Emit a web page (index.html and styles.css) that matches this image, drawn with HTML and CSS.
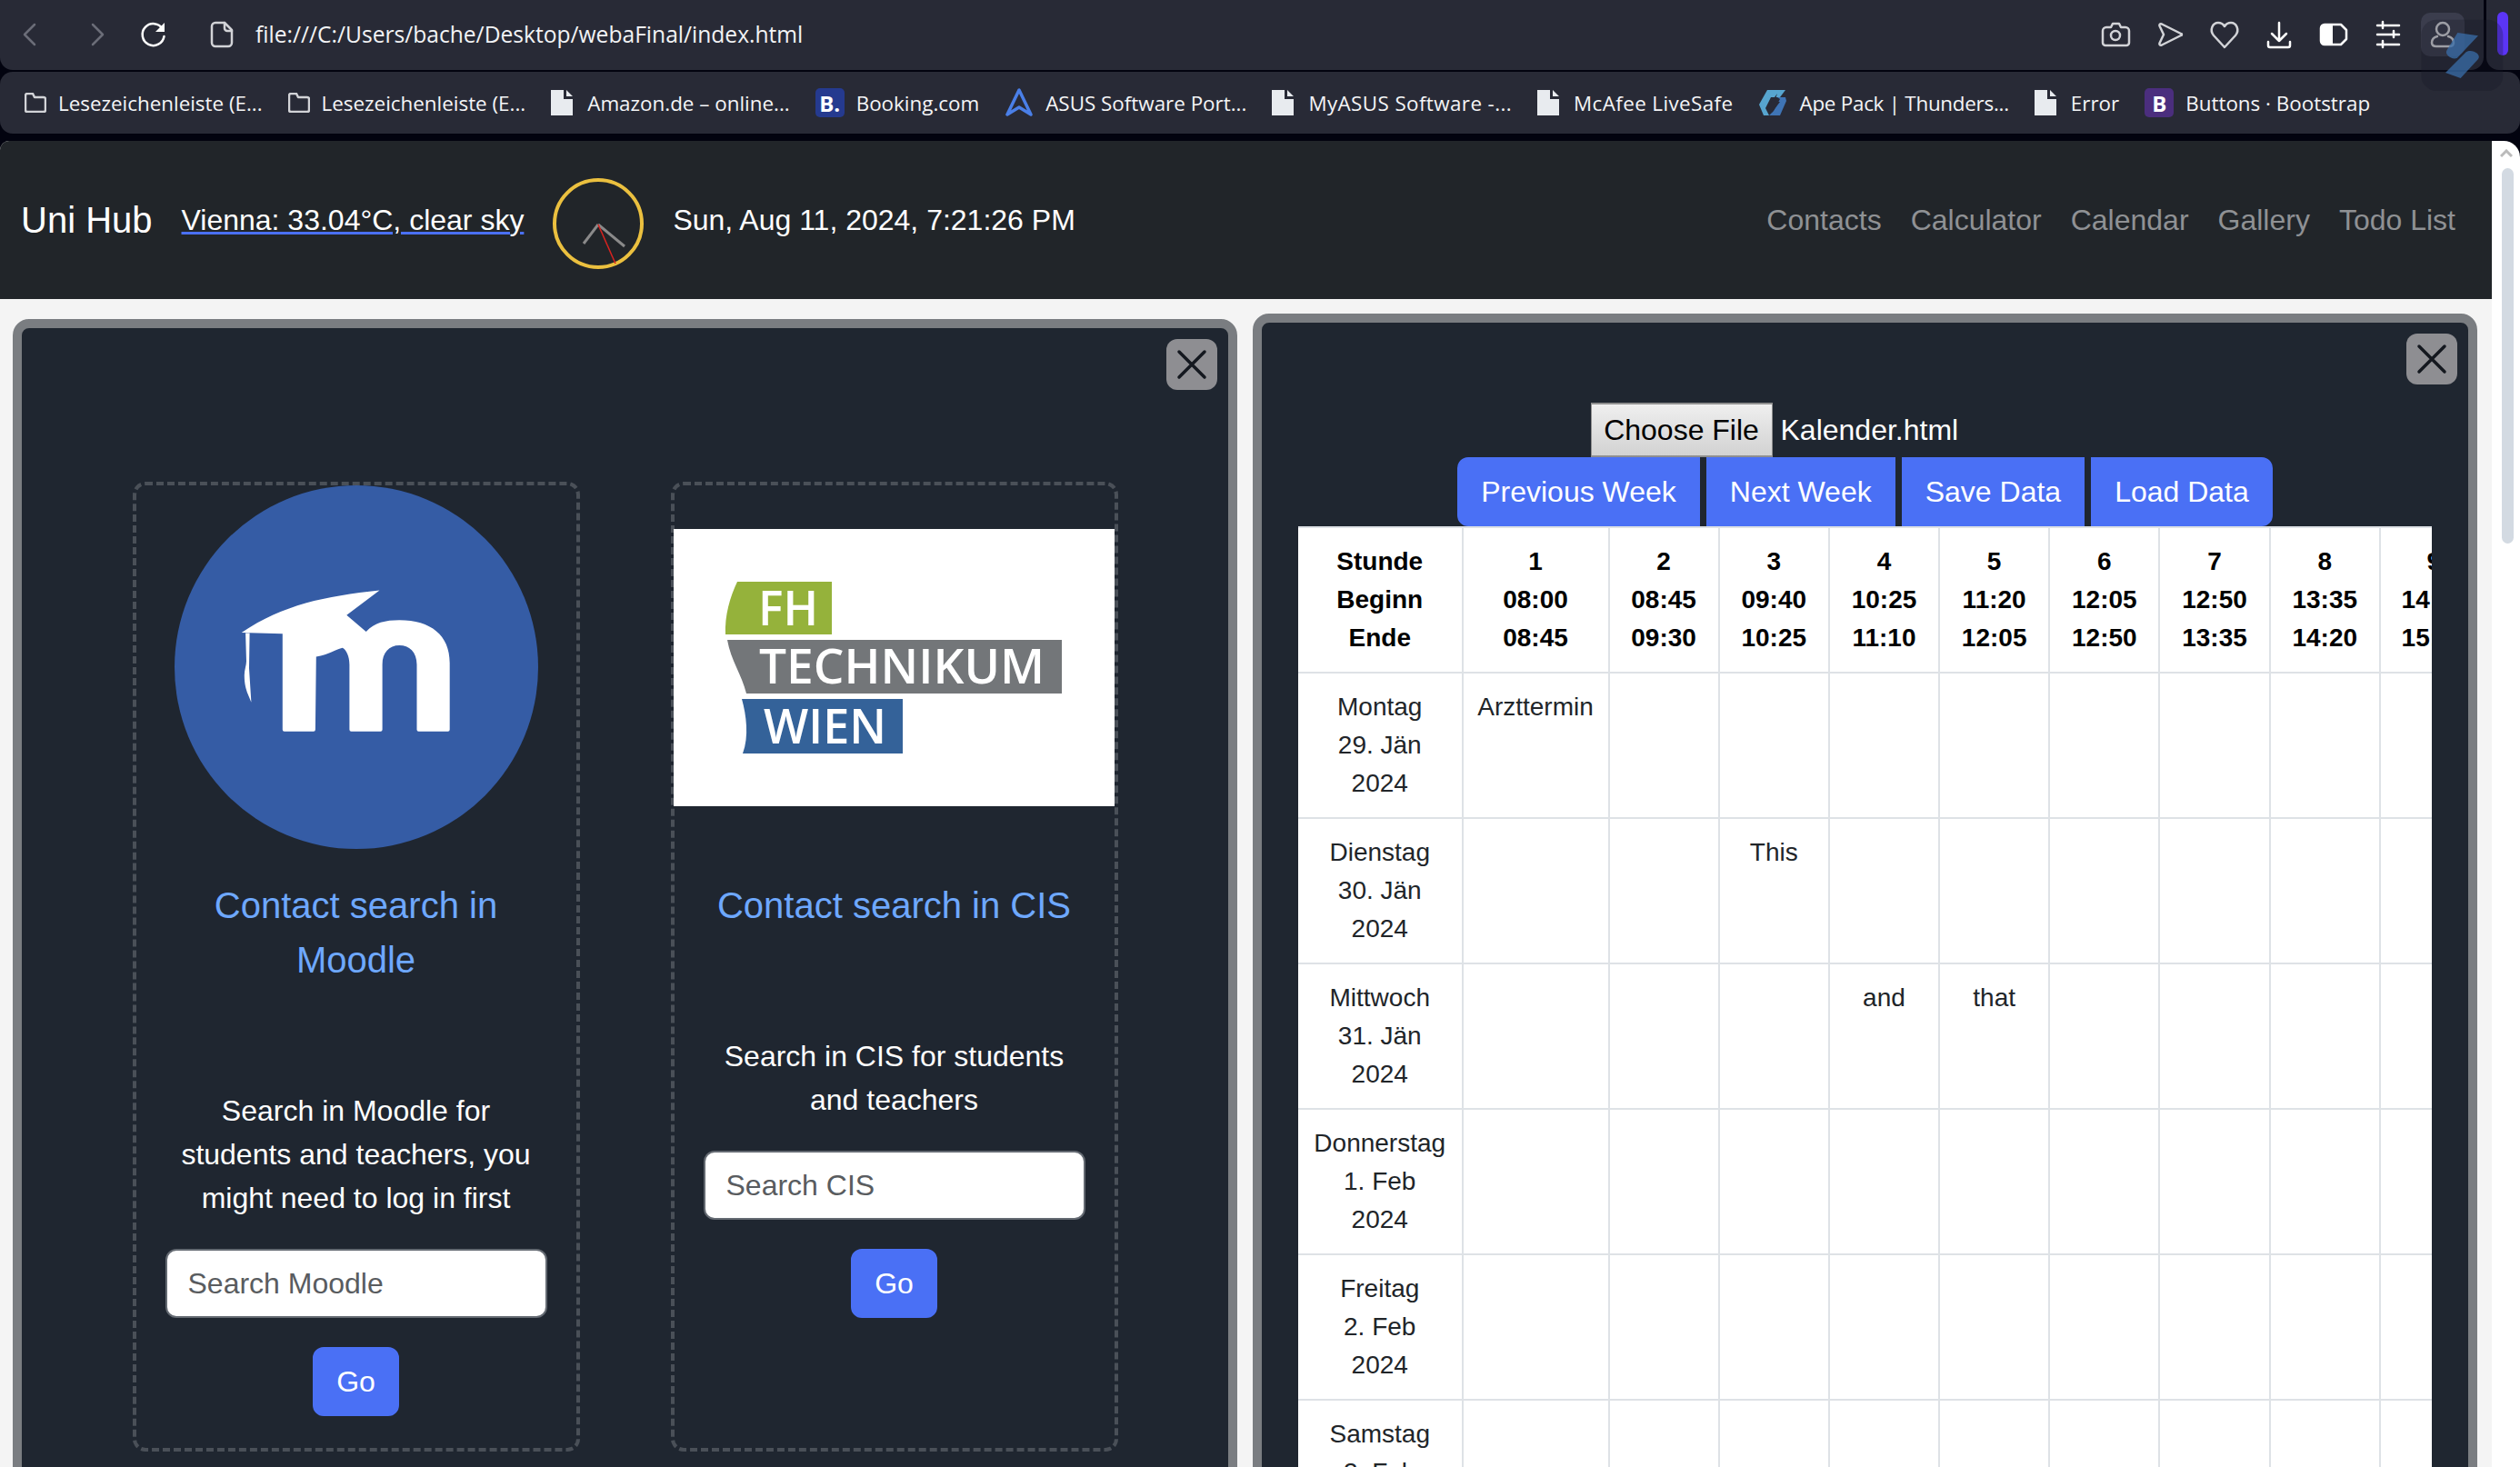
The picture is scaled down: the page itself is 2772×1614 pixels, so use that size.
FILE: index.html
```html
<!DOCTYPE html>
<html lang="en">
<head>
  <meta charset="UTF-8">
  <title>Uni Hub</title>
  <link rel="stylesheet" href="styles.css">
</head>
<body>
  <!-- browser chrome -->
  <div class="chrome">
    <div class="top-row">
      <div class="toolbar">
        <span class="tool nav-back"><svg width="36" height="36" viewBox="0 0 36 36"><path class="dim" d="M23 7 12 18l11 11"/></svg></span>
        <span class="tool nav-forward"><svg width="36" height="36" viewBox="0 0 36 36"><path class="dim" d="m13 7 11 11-11 11"/></svg></span>
        <span class="tool nav-reload"><svg width="36" height="36" viewBox="0 0 36 36"><path class="light" d="M28 12a12 12 0 1 0 1.500 8"/><path class="solid" d="M30 5v10H20z"/></svg></span>
        <span class="tool nav-doc"><svg width="36" height="36" viewBox="0 0 36 36"><path class="soft" d="M11 6h10l8 8v14a4 4 0 0 1-4 4H11a4 4 0 0 1-4-4V10a4 4 0 0 1 4-4z" transform="translate(1 -1)"/><path class="soft" d="M22 5v6a3 3 0 0 0 3 3h5"/></svg></span>
        <span class="url">file:///C:/Users/bache/Desktop/webaFinal/index.html</span>
        <div class="tool-group">
          <span class="tool"><svg width="36" height="36" viewBox="0 0 36 36"><path class="soft" d="M8 10h5l2-4h7l2 4h5a4 4 0 0 1 4 4v13a3 3 0 0 1-3 3H7a3 3 0 0 1-3-3V14a4 4 0 0 1 4-4z"/><circle class="soft" cx="18" cy="19" r="5"/></svg></span>
          <span class="tool"><svg width="36" height="36" viewBox="0 0 36 36"><path class="soft" d="M9 6.500 30 17a1 1 0 0 1 0 2L9 29.500c-2 .8-3-.5-2.500-2L11 18 6.500 8.500C6 7 7 5.700 9 6.500z"/></svg></span>
          <span class="tool"><svg width="36" height="36" viewBox="0 0 36 36"><path class="soft" d="M18 32 6 19C1 13 5 5 11 5c3 0 5.500 1.500 7 4 1.500-2.500 4-4 7-4 6 0 10 8 5 14z"/></svg></span>
          <span class="tool"><svg width="36" height="36" viewBox="0 0 36 36"><path class="light" d="M18 5v20M10 17l8 8 8-8M6 26v4a2 2 0 0 0 2 2h20a2 2 0 0 0 2-2v-4"/></svg></span>
          <span class="tool"><svg width="36" height="36" viewBox="0 0 36 36"><path class="light" d="M8 7h18l6 6v10l-6 6H8a4 4 0 0 1-4-4V11a4 4 0 0 1 4-4z"/><path class="solid" d="M8 7h9v22H8a4 4 0 0 1-4-4V11a4 4 0 0 1 4-4z"/></svg></span>
          <span class="tool"><svg width="36" height="36" viewBox="0 0 36 36"><path class="light" d="M6 8h24M6 18h24M6 29h24M12 4v7M24 14v7M12 25v7"/></svg></span>
          <span class="tool tool-active"><svg width="36" height="36" viewBox="0 0 36 36"><circle class="soft" cx="18" cy="12" r="7"/><path class="soft" d="M12 20c-4 1-6 4-6 7 0 3 2 4 5 4h14c3 0 5-1 5-4 0-3-2-6-6-7"/></svg></span>
        </div>
      </div>
      <div class="side-strip"><span class="side-bar"></span></div>
    </div>
    <div class="bookmarks">
      <span class="bm"><svg width="24" height="22" viewBox="0 0 24 22"><path class="soft" d="M1 3a2 2 0 0 1 2-2h6l2 4h10a2 2 0 0 1 2 2v12a2 2 0 0 1-2 2H3a2 2 0 0 1-2-2z"/></svg>Lesezeichenleiste (E...</span>
      <span class="bm"><svg width="24" height="22" viewBox="0 0 24 22"><path class="soft" d="M1 3a2 2 0 0 1 2-2h6l2 4h10a2 2 0 0 1 2 2v12a2 2 0 0 1-2 2H3a2 2 0 0 1-2-2z"/></svg>Lesezeichenleiste (E...</span>
      <span class="bm bm-doc"><svg width="24" height="28" viewBox="0 0 24 28"><path class="doc" d="M0 0h14v10h10v18H0zM17 0l7 7h-7z"/></svg>Amazon.de – online...</span>
      <span class="bm"><span class="fav fav-booking">B.</span>Booking.com</span>
      <span class="bm"><svg width="32" height="32" viewBox="0 0 32 32"><path class="asus" d="M16 2 3 29l13-8 13 8zM3 29"/></svg>ASUS Software Port...</span>
      <span class="bm bm-doc bm-loose"><svg width="24" height="28" viewBox="0 0 24 28"><path class="doc" d="M0 0h14v10h10v18H0zM17 0l7 7h-7z"/></svg>MyASUS Software -...</span>
      <span class="bm bm-doc bm-loose"><svg width="24" height="28" viewBox="0 0 24 28"><path class="doc" d="M0 0h14v10h10v18H0zM17 0l7 7h-7z"/></svg>McAfee LiveSafe</span>
      <span class="bm bm-tight"><svg width="32" height="32" viewBox="0 0 32 32"><path class="ape-a" d="M10 2h20l-6 8H14l-6 12 4 8H6L1 18z"/><path class="ape-b" d="M14 10h16l1 4-7 16H12l5-5 7-13-3-2z"/><path class="ape-c" d="M21 6 12 18h6l-3 9 9-12h-6z"/></svg>Ape Pack | Thunders...</span>
      <span class="bm bm-doc"><svg width="24" height="28" viewBox="0 0 24 28"><path class="doc" d="M0 0h14v10h10v18H0zM17 0l7 7h-7z"/></svg>Error</span>
      <span class="bm"><span class="fav fav-bootstrap">B</span>Buttons · Bootstrap</span>
    </div>
  </div>

  <!-- floating extension badge over the chrome -->
  <svg class="ext-badge" width="122" height="110" viewBox="0 0 366 330">
    <rect class="ext-shadow" x="40" y="65" width="270" height="235" rx="50"/>
    <path class="ext-top" d="M160 108 228 118 158 192C140 198 115 180 125 165z"/>
    <path class="ext-bottom" d="M120 240 188 172C205 160 240 178 228 195L170 258z"/>
  </svg>

  <div class="page">
    <div class="content">
      <nav class="navbar">
        <a class="brand">Uni Hub</a>
        <a class="weather">Vienna: 33.04°C, clear sky</a>
        <svg class="clock" width="100" height="100" viewBox="0 0 100 100">
          <circle class="clock-face" cx="50" cy="50" r="48"/>
          <line class="clock-hand" x1="50" y1="51" x2="34" y2="72"/>
          <line class="clock-hand" x1="50" y1="51" x2="79" y2="75"/>
          <line class="clock-second" x1="50" y1="51" x2="69" y2="94"/>
        </svg>
        <span class="datetime">Sun, Aug 11, 2024, 7:21:26 PM</span>
        <ul class="nav-links">
          <li>Contacts</li>
          <li>Calculator</li>
          <li>Calendar</li>
          <li>Gallery</li>
          <li>Todo List</li>
        </ul>
      </nav>

      <main class="panels">
        <!-- contact search -->
        <section class="panel panel-left">
          <button class="close-btn"><svg width="34" height="34" viewBox="0 0 34 34"><path d="M3 3l28 28M31 3 3 31"/></svg></button>
          <div class="card-row">
            <div class="card">
              <div class="card-img">
                <svg width="400" height="400" viewBox="0 0 400 400">
                  <circle class="moodle-bg" cx="200" cy="200" r="200"/>
                  <path class="moodle-m" d="M73.700 162C120 131 165 122 225.500 115.500L189.300 142.800 210.700 160.900C220 151 232 148.300 247.300 148.300 282 148.300 302.700 165 302.700 195.300V268.800Q302.700 270.800 300.700 270.800H268.500Q266.500 270.800 266.500 268.800V197.300C266.500 183 258 176 247.300 176 236 176 228.600 184 228.600 197.300V268.800Q228.600 270.800 226.600 270.800H194.400Q192.400 270.800 192.400 268.800V197.300C192.400 188 189 181 184.800 178.700 178 180 170 186 155.800 188.600L154.900 268.800Q154.900 270.800 152.900 270.800H120.800Q118.800 270.800 118.800 268.800V163.300z"/>
                  <path class="moodle-m" d="M78.100 162.500H82.600L82 201.300 84.400 238.800C80 228 76.800 222 76.800 209 76.800 203 79 198 79 193.400z"/>
                </svg>
              </div>
              <h2 class="card-title">Contact search in Moodle</h2>
              <p class="card-text">Search in Moodle for students and teachers, you might need to log in first</p>
              <input class="search-input" type="text" placeholder="Search Moodle">
              <button class="btn go-btn">Go</button>
            </div>
            <div class="card">
              <div class="card-img">
                <svg class="fh-logo" width="485" height="305" viewBox="0 0 485 305">
                  <rect class="fh-white" width="485" height="305"/>
                  <path class="fh-green" d="M70 58H174V116H57C56 95 62 75 70 58z"/>
                  <path class="fh-grey" d="M59 122H427V181H80C75 160 63 145 59 122z"/>
                  <path class="fh-blue" d="M75 187H252V247H76C83 228 80 205 75 187z"/>
                  <text class="fh-text" x="93" y="106" font-size="53" textLength="66" lengthAdjust="spacingAndGlyphs">FH</text>
                  <text class="fh-text" x="94" y="170" font-size="52" textLength="314" lengthAdjust="spacingAndGlyphs">TECHNIKUM</text>
                  <text class="fh-text" x="99" y="236" font-size="53" textLength="135" lengthAdjust="spacingAndGlyphs">WIEN</text>
                </svg>
              </div>
              <h2 class="card-title">Contact search in CIS</h2>
              <p class="card-text">Search in CIS for students and teachers</p>
              <input class="search-input" type="text" placeholder="Search CIS">
              <button class="btn go-btn">Go</button>
            </div>
          </div>
        </section>

        <!-- calendar -->
        <section class="panel panel-right">
          <button class="close-btn"><svg width="34" height="34" viewBox="0 0 34 34"><path d="M3 3l28 28M31 3 3 31"/></svg></button>
          <div class="file-row">
            <span class="file-btn">Choose File</span>
            <span class="file-name">Kalender.html</span>
          </div>
          <div class="week-btns">
            <button class="btn">Previous Week</button>
            <button class="btn">Next Week</button>
            <button class="btn">Save Data</button>
            <button class="btn">Load Data</button>
          </div>
          <div class="table-wrap">
            <table class="week-table">
              <colgroup>
                <col class="col-day"><col class="col-first"><col class="col-std"><col class="col-std"><col class="col-std"><col class="col-std"><col class="col-std"><col class="col-std"><col class="col-std">
              </colgroup>
              <thead>
                <tr>
                  <th>Stunde<br>Beginn<br>Ende</th>
                  <th>1<br>08:00<br>08:45</th>
                  <th>2<br>08:45<br>09:30</th>
                  <th>3<br>09:40<br>10:25</th>
                  <th>4<br>10:25<br>11:10</th>
                  <th>5<br>11:20<br>12:05</th>
                  <th>6<br>12:05<br>12:50</th>
                  <th>7<br>12:50<br>13:35</th>
                  <th>8<br>13:35<br>14:20</th>
                  <th>9<br>14:20<br>15:05</th>
                </tr>
              </thead>
              <tbody>
                <tr><td>Montag<br>29. Jän<br>2024</td><td>Arzttermin</td><td></td><td></td><td></td><td></td><td></td><td></td><td></td><td></td></tr>
                <tr><td>Dienstag<br>30. Jän<br>2024</td><td></td><td></td><td>This</td><td></td><td></td><td></td><td></td><td></td><td></td></tr>
                <tr><td>Mittwoch<br>31. Jän<br>2024</td><td></td><td></td><td></td><td>and</td><td>that</td><td></td><td></td><td></td><td></td></tr>
                <tr><td>Donnerstag<br>1. Feb<br>2024</td><td></td><td></td><td></td><td></td><td></td><td></td><td></td><td></td><td></td></tr>
                <tr><td>Freitag<br>2. Feb<br>2024</td><td></td><td></td><td></td><td></td><td></td><td></td><td></td><td></td><td></td></tr>
                <tr><td>Samstag<br>3. Feb<br>2024</td><td></td><td></td><td></td><td></td><td></td><td></td><td></td><td></td><td></td></tr>
              </tbody>
            </table>
          </div>
        </section>
      </main>
    </div>
    <div class="scrollbar">
      <svg class="scroll-arrow" width="14" height="10" viewBox="0 0 14 10"><path d="M1 8l6-6 6 6"/></svg>
      <div class="scroll-thumb"></div>
    </div>
  </div>
</body>
</html>
```

FILE: styles.css
```css
* {
  box-sizing: border-box;
}

html, body {
  margin: 0;
  height: 100%;
  overflow: hidden;
}

body {
  display: flex;
  flex-direction: column;
  background-color: #02030f;
  font-family: "Liberation Sans", Arial, sans-serif;
  font-size: 32px;
  color: #fff;
}

svg {
  display: block;
  flex-shrink: 0;
  fill: none;
}

/* browser chrome */
.chrome {
  flex-shrink: 0;
  height: 155px;
  font-family: "Open Sans", "Noto Sans", sans-serif;
}

.top-row {
  display: flex;
  height: 77px;
  gap: 3px;
}

.toolbar {
  flex: 1;
  display: flex;
  align-items: center;
  padding: 0 21px 2px 9px;
  background-color: #282a36;
  border-radius: 0 0 14px 14px;
}

.tool {
  width: 48px;
  height: 48px;
  display: flex;
  align-items: center;
  justify-content: center;
  border-radius: 10px;
}

.nav-forward {
  margin-left: 26px;
}

.nav-reload {
  margin-left: 14px;
}

.nav-doc {
  margin-left: 26px;
}

.url {
  margin-left: 14px;
  font-size: 24.600px;
  color: #f2f3f5;
}

.tool-group {
  margin-left: auto;
  display: flex;
  gap: 12px;
}

.tool-active {
  background-color: #3b3d4d;
}

.dim, .light, .soft {
  stroke-width: 2.5;
  stroke-linecap: round;
  stroke-linejoin: round;
}

.dim {
  stroke: #6b6d78;
}

.light {
  stroke: #fff;
}

.soft {
  stroke: #d2d3d7;
}

.solid {
  fill: #fff;
}

.side-strip {
  width: 37px;
  display: flex;
  padding: 13px 0 0 12px;
  background-color: #282a36;
  border-radius: 0 0 0 14px;
}

.side-bar {
  width: 12px;
  height: 48px;
  background-color: #5b35f5;
  border-radius: 6px;
}

.bookmarks {
  display: flex;
  align-items: center;
  height: 68px;
  margin-top: 2px;
  padding-left: 27px;
  gap: 28px;
  background-color: #282a36;
  border-radius: 14px;
  font-size: 22.400px;
  color: #f4f5f7;
}

.bm {
  display: flex;
  align-items: center;
  gap: 13px;
  white-space: nowrap;
}

.bm-doc {
  gap: 16px;
}

.bm-loose {
  letter-spacing: 0.4px;
}

.bm-tight {
  letter-spacing: -0.25px;
}

.doc {
  fill: #e8ebef;
}

.fav {
  width: 32px;
  height: 32px;
  display: flex;
  align-items: center;
  justify-content: center;
  border-radius: 5px;
  font-size: 24px;
  font-weight: 700;
  color: #fff;
}

.fav-booking {
  background-color: #253a8f;
}

.fav-bootstrap {
  background-color: #4b2e7e;
}

.asus {
  stroke: #4a7fe8;
  stroke-width: 3.5;
  stroke-linejoin: round;
}

.ape-a {
  fill: #57a5cf;
}

.ape-b {
  fill: #3f74b5;
}

.ape-c {
  fill: #282a36;
}

.ext-badge {
  position: absolute;
  top: 0;
  left: 2650px;
}

.ext-shadow {
  fill: rgba(20, 22, 36, 0.28);
}

.ext-top, .ext-bottom {
  fill: rgba(58, 110, 170, 0.75);
}

/* page */
.page {
  flex: 1;
  display: flex;
  min-height: 0;
}

.content {
  flex: 1;
  min-width: 0;
  background-color: #f4f4f4;
  border-radius: 10px 0 0 0;
  overflow: hidden;
}

.scrollbar {
  width: 31px;
  display: flex;
  flex-direction: column;
  align-items: center;
  padding-top: 9px;
  background-color: #fff;
  border-radius: 0 18px 0 0;
}

.scroll-arrow path {
  stroke: #bbb;
  stroke-width: 3;
}

.scroll-thumb {
  width: 13px;
  height: 413px;
  margin-top: 11px;
  margin-left: 4px;
  background-color: #d3dae2;
  border-radius: 7px;
}

.navbar {
  display: flex;
  align-items: center;
  height: 174px;
  padding: 0 40px 0 23px;
  background-color: #212529;
}

.brand {
  margin-right: 32px;
  font-size: 40px;
}

.weather {
  margin-right: 32px;
  text-decoration: underline;
  text-decoration-color: #4a70f5;
}

.clock {
  margin-right: 32px;
  margin-top: 8px;
}

.clock-face {
  stroke: #ebc03f;
  stroke-width: 4;
}

.clock-hand {
  stroke: #8a8a8a;
  stroke-width: 3;
}

.clock-second {
  stroke: #d8231f;
  stroke-width: 1.500;
}

.nav-links {
  display: flex;
  gap: 32px;
  margin: 0 0 0 auto;
  padding: 0;
  list-style: none;
  color: #8f9194;
}

.panels {
  display: grid;
  grid-template-columns: 1fr 1fr;
  align-items: start;
  gap: 17px;
  padding: 0 16px 0 14px;
}

.panel {
  position: relative;
  min-width: 0;
  border: 10px solid #7a7d81;
  border-radius: 18px;
  background-color: #1f2630;
}

.panel-left {
  margin-top: 22px;
  padding: 169px 0 60px;
}

.panel-right {
  margin-top: 16px;
  padding: 88px 40px 0;
}

.close-btn {
  position: absolute;
  top: 12px;
  right: 12px;
  width: 56px;
  height: 56px;
  display: flex;
  align-items: center;
  justify-content: center;
  padding: 0;
  border: 0;
  border-radius: 12px;
  background-color: #8e8e92;
}

.close-btn path {
  stroke: #14181f;
  stroke-width: 3.500;
  stroke-linecap: round;
}

/* cards */
.card-row {
  display: flex;
  justify-content: center;
  gap: 100px;
}

.card {
  width: 492px;
  display: flex;
  flex-direction: column;
  align-items: center;
  padding: 0 32px 35px;
  border: 4px dashed #4a5058;
  border-radius: 14px;
  text-align: center;
}

.card-img {
  height: 400px;
  display: flex;
  align-items: center;
  justify-content: center;
  margin: 0 -32px 32px;
}

.moodle-bg {
  fill: #355ca5;
}

.moodle-m {
  fill: #fff;
}

.fh-white {
  fill: #fff;
}

.fh-green {
  fill: #95b23b;
}

.fh-grey {
  fill: #737679;
}

.fh-blue {
  fill: #346299;
}

.fh-text {
  fill: #fff;
  font-family: "Open Sans", sans-serif;
  font-weight: 600;
}

.card-title {
  margin: 0 0 112px;
  font-size: 40px;
  font-weight: 400;
  line-height: 60px;
  color: #6ea8fe;
}

.card-text {
  margin: 0 0 32px;
  line-height: 48px;
}

.search-input {
  width: 420px;
  height: 76px;
  margin-bottom: 32px;
  padding: 0 23px;
  border: 2px solid #646a72;
  border-radius: 12px;
  background-color: #fff;
  font: inherit;
  flex-shrink: 0;
}

.search-input::placeholder {
  color: #595c5f;
}

.btn {
  height: 76px;
  padding: 0 24px;
  border: 2px solid #4a70f5;
  border-radius: 12px;
  background-color: #4a70f5;
  color: #fff;
  font: inherit;
  flex-shrink: 0;
}

/* calendar */
.file-row {
  display: flex;
  align-items: center;
  gap: 9px;
  width: 604px;
  margin: 0 auto;
}

.file-btn {
  width: 200px;
  height: 60px;
  display: flex;
  align-items: center;
  justify-content: center;
  border: 2px solid #8f8f8f;
  border-width: 2px 1px;
  background: linear-gradient(#efefef, #d2d2d2);
  color: #000;
}

.week-btns {
  display: flex;
  justify-content: center;
  gap: 7px;
}

.week-btns .btn {
  border-radius: 0;
}

.week-btns .btn:first-child {
  border-radius: 12px 0 0 12px;
}

.week-btns .btn:last-child {
  border-radius: 0 12px 12px 0;
}

.table-wrap {
  overflow: hidden;
  background-color: #fff;
  border-top: 2px solid #dee2e6;
}

.week-table {
  table-layout: fixed;
  width: 1310px;
  border-collapse: separate;
  border-spacing: 0;
  font-size: 28px;
  line-height: 42px;
  color: #212529;
}

.week-table th {
  color: #000;
}

.week-table th, .week-table td {
  height: 160px;
  padding: 16px 0;
  text-align: center;
  vertical-align: top;
  border-right: 2px solid #dee2e6;
  border-bottom: 2px solid #dee2e6;
}

.col-day {
  width: 181.500px;
}

.col-first {
  width: 161px;
}

.col-std {
  width: 121.200px;
}
```
